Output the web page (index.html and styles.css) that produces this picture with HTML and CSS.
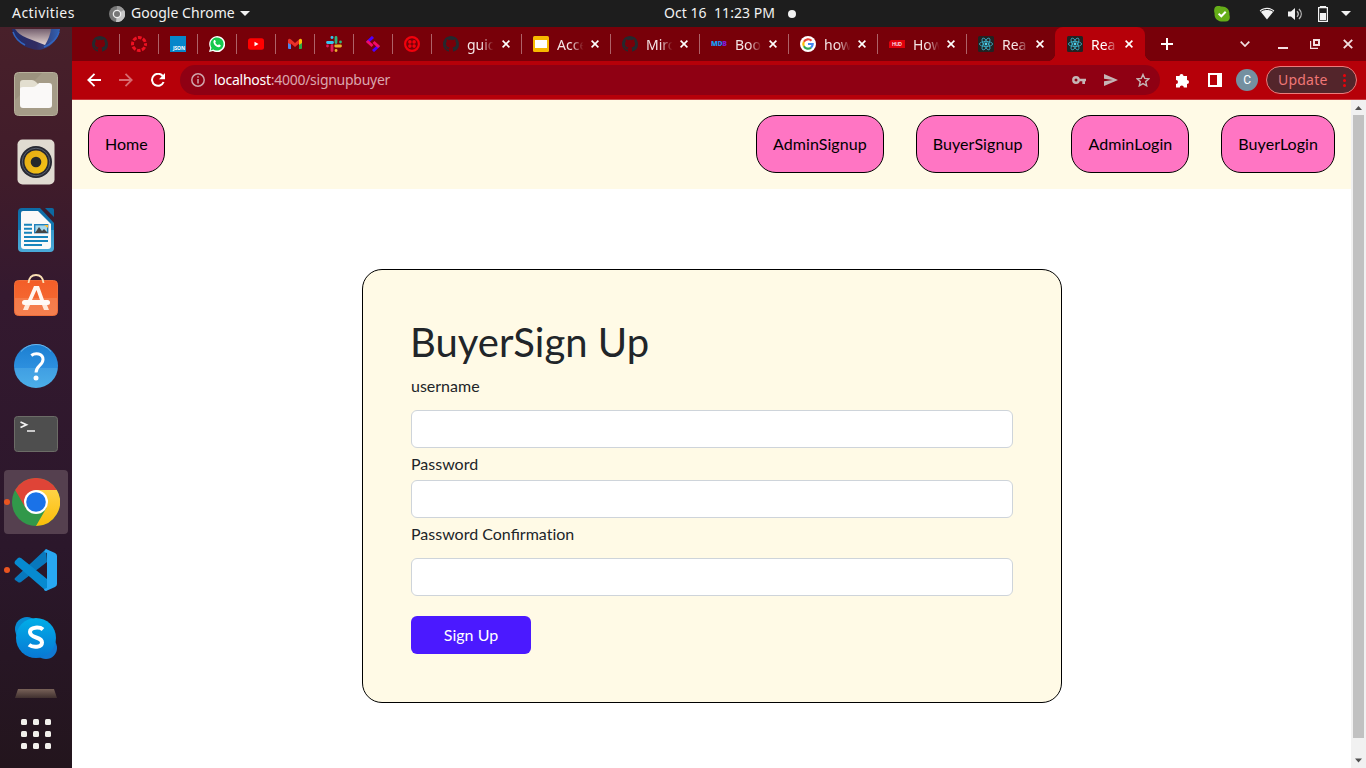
FILE: index.html
```html
<!DOCTYPE html>
<html lang="en">
<head>
<meta charset="utf-8">
<title>React App</title>
<link rel="stylesheet" href="styles.css">
</head>
<body>
<svg width="0" height="0" class="defs">
  <defs>
    <symbol id="github" viewBox="0 0 16 16"><path fill="#24292e" d="M8 0C3.58 0 0 3.58 0 8c0 3.54 2.29 6.53 5.47 7.59.4.07.55-.17.55-.38 0-.19-.01-.82-.01-1.49-2.01.37-2.53-.49-2.69-.94-.09-.23-.48-.94-.82-1.13-.28-.15-.68-.52-.01-.53.63-.01 1.08.58 1.23.82.72 1.21 1.87.87 2.33.66.07-.52.28-.87.51-1.07-1.78-.2-3.64-.89-3.64-3.95 0-.87.31-1.59.82-2.15-.08-.2-.36-1.02.08-2.12 0 0 .67-.21 2.2.82.64-.18 1.32-.27 2-.27s1.36.09 2 .27c1.53-1.04 2.2-.82 2.2-.82.44 1.1.16 1.92.08 2.12.51.56.82 1.27.82 2.15 0 3.07-1.87 3.75-3.65 3.95.29.25.54.73.54 1.48 0 1.07-.01 1.93-.01 2.2 0 .21.15.46.55.38A8.01 8.01 0 0 0 16 8c0-4.42-3.58-8-8-8z"/></symbol>
    <symbol id="react" viewBox="0 0 16 16"><rect width="16" height="16" rx="1.5" fill="#222"/><g fill="none" stroke="#3cb6cf" stroke-width=".8"><ellipse cx="8" cy="8" rx="6.6" ry="2.5"/><ellipse cx="8" cy="8" rx="6.6" ry="2.5" transform="rotate(60 8 8)"/><ellipse cx="8" cy="8" rx="6.6" ry="2.5" transform="rotate(120 8 8)"/></g><circle cx="8" cy="8" r="1.4" fill="#53d4f0"/></symbol>
    <symbol id="close" viewBox="0 0 8 8"><path d="M.6.6l6.8 6.800M7.400.6L.6 7.400" stroke="#fff" stroke-width="1.600"/></symbol>
    <linearGradient id="sheet" x2="0" y2="1"><stop offset="0" stop-color="#0d6ba5"/><stop offset=".5" stop-color="#1479b2"/><stop offset=".5" stop-color="#3599cb"/><stop offset="1" stop-color="#4aaad8"/></linearGradient>
    <linearGradient id="bag" x2="0" y2="1"><stop offset="0" stop-color="#f35e28"/><stop offset=".5" stop-color="#f4662f"/><stop offset=".5" stop-color="#f57a48"/><stop offset="1" stop-color="#f48050"/></linearGradient>
    <linearGradient id="help" x2="0" y2="1"><stop offset="0" stop-color="#1b7ed0"/><stop offset=".55" stop-color="#2d90df"/><stop offset=".55" stop-color="#409fe3"/><stop offset="1" stop-color="#4caee8"/></linearGradient>
    <linearGradient id="skype" x2="0" y2="1"><stop offset="0" stop-color="#00aee8"/><stop offset="1" stop-color="#0878d4"/></linearGradient>
    <linearGradient id="bird" x2="1" y2="0"><stop offset="0" stop-color="#1e2e70"/><stop offset=".5" stop-color="#322b60"/><stop offset="1" stop-color="#3163b5"/></linearGradient>
    <linearGradient id="mail" x2="0" y2="1"><stop offset="0" stop-color="#75606f"/><stop offset="1" stop-color="#e4d5d2"/></linearGradient>
    <linearGradient id="trash" x2="0" y2="1"><stop offset="0" stop-color="#786258"/><stop offset="1" stop-color="#40302f"/></linearGradient>
    <linearGradient id="cone" x2="1" y2="1"><stop offset="0" stop-color="#e9ad08"/><stop offset=".5" stop-color="#e9b51c"/><stop offset="1" stop-color="#f8c70c"/></linearGradient>
    <linearGradient id="yel" x2="0" y2="1"><stop offset="0" stop-color="#ffd246"/><stop offset="1" stop-color="#fabd08"/></linearGradient>
  </defs>
</svg>

<header class="topbar">
  <span class="activities">Activities</span>
  <svg class="app-icon" width="16" height="16"><circle cx="8" cy="8" r="8" fill="#777"/><path d="M8 8V0a8 8 0 0 1 7 12z" fill="#999"/><path d="M8 8l7-4a8 8 0 0 1-8 12z" fill="#c5c5c5"/><circle cx="8" cy="8" r="4.300" fill="#eee"/><circle cx="8" cy="8" r="3" fill="#777"/></svg>
  <span class="app-name">Google Chrome</span>
  <svg class="caret" width="10" height="5"><path d="M0 0h10L5 5z" fill="#f2f2f2"/></svg>
  <span class="clock">Oct 16&nbsp; 11:23 PM</span>
  <i class="dot"></i>
  <div class="tray">
    <svg width="16" height="16"><path d="M1 1.300C2 0 5-.2 7 .5c5-.7 9 3 8.400 8.300C16.500 12 15.500 16 10.500 15.400 5 16.200 0 13 .6 7.500 0 5.500-.2 3 1 1.300z" fill="#65ad18"/><path d="M4.600 7.600l2.700 2.700 4.400-4.500" fill="none" stroke="#fff" stroke-width="2"/></svg>
    <svg class="wifi" width="16" height="14"><path d="M.7 3.500C4.800-.2 11.200-.2 15.300 3.500L8 12.500z" fill="#f2f2f2"/><path d="M1.800 4.500c3.500-2.700 8.900-2.700 12.400 0" fill="none" stroke="#1d1d1d"/></svg>
    <svg class="volume" width="16" height="14"><path d="M1 4.500h3L8 1v12L4 9.500H1z" fill="#f2f2f2"/><path d="M10 4.200c1.500 1.600 1.500 4 0 5.600M12 2c3 3 3 7 0 10" fill="none" stroke="#bbb" stroke-width="1.300"/></svg>
    <svg class="battery" width="10" height="16"><path d="M2.500 1.600V.5h5v1.100M.6 1.700h8.800v13.600H.6z" fill="none" stroke="#f2f2f2" stroke-width="1.200"/><path d="M2 7h6v7H2z" fill="#f2f2f2"/></svg>
    <svg class="menu-caret" width="10" height="5"><path d="M0 0h10L5 5z" fill="#f2f2f2"/></svg>
  </div>
</header>

<div class="desktop">
  <aside class="dock">
    <div class="slot-top"><svg width="52" height="31"><path d="M2 2h48c-1 9-8 17-17 20-6 2-10 0-14-1C10 18 4 11 2 2z" fill="url(#bird)"/><path d="M5 2h36q-1 8-6 16L17 11Q9 8 5 2z" fill="url(#mail)"/><path d="M3 5c2 6 6 10 12 13M49 5Q46 15 34 20" stroke="#3265bf" stroke-width="1.500" fill="none"/></svg></div>
    <div class="slot"><svg width="48" height="48"><rect x="2.500" y="2.500" width="43" height="43" rx="4" fill="#9b927e" stroke="#b7b19c"/><path d="M3 30L30 3h12q3 0 3 3v36q0 3-3 3H6q-3 0-3-3z" fill="#aaa18d" opacity=".7"/><path d="M8 31V13q0-3 3-3h9q2 0 4 2l2 2h10v6z" fill="#e2decf"/><path d="M8 19q0-2 3-2h10q2 0 4-2l2-2h10q3 0 3 3v19q0 3-3 3H11q-3 0-3-3z" fill="#faf9f8"/></svg></div>
    <div class="slot"><svg width="48" height="48"><rect x="5.500" y="1.500" width="37" height="45" rx="5" fill="#e0dbd1"/><circle cx="24" cy="24" r="16" fill="#272932"/><circle cx="24" cy="24" r="13.800" fill="none" stroke="#59616e" stroke-width="1"/><circle cx="24" cy="24" r="11.500" fill="url(#cone)"/><circle cx="24" cy="24" r="5.300" fill="#25292b"/></svg></div>
    <div class="slot"><svg width="48" height="48"><path d="M10 2h18l14 15v25q0 4-4 4H10q-4 0-4-4V6q0-4 4-4z" fill="url(#sheet)"/><path d="M33 2h7q2 0 2 2v7z" fill="#0c69a1"/><path d="M11 5h15l13 13v22q0 3-3 3H12q-3 0-3-3V7q0-2 2-2z" fill="#faf9f8"/><path d="M12 18.800h8M12 22.800h8M12 26.800h8M12 30.900h24M12 34.900h24M12 38.900h18" stroke="#1684bc" stroke-width="2"/><rect x="22.700" y="18.700" width="13" height="8" fill="#a6d9ec" stroke="#2181bb" stroke-width="1.400"/><path d="M23 27l4-6 3 4 2-2 4 4z" fill="#444"/><path d="M32 19h4v3z" fill="#fdbc32"/></svg></div>
    <div class="slot"><svg width="48" height="48"><rect x="2.500" y="6.500" width="43" height="35" rx="4" fill="url(#bag)" stroke="#ed6d3a"/><path d="M16.500 9C17 4 19 1 24 1s7 3 7.500 8" fill="none" stroke="#fbe0b4" stroke-width="1.800"/><path d="M22 12h5l5 14h-4L24.500 16 20 26h-4z" fill="#fff7f0"/><path d="M13 31h5l-2 5h-5zM30 31h5l2 5h-5z" fill="#ffe8d9"/><rect x="10" y="26" width="28" height="5" rx="2.500" fill="#fffaf6"/></svg></div>
    <div class="slot"><svg width="48" height="48"><circle cx="24" cy="24" r="22" fill="url(#help)"/><path d="M9 9.500Q15 2.700 24 2.500T39 9.500" fill="none" stroke="#6eb6ea"/><path d="M19.300 13.500c4-3 11.700-2.400 11.700 4 0 6-7 5.800-7 13" fill="none" stroke="#fff" stroke-width="3"/><circle cx="24" cy="36" r="2.500" fill="#fff"/></svg></div>
    <div class="slot"><svg width="48" height="48"><rect x="2.500" y="6.500" width="43" height="35" rx="3" fill="#4e4e4e" stroke="#6c6c67"/><path d="M8.500 12l6 2.700-6 2.800M15 21h8" fill="none" stroke="#f2f2f2" stroke-width="1.700"/></svg></div>
    <div class="slot active"><i class="running"></i><svg width="48" height="48"><circle cx="24" cy="24" r="24" fill="#31984a"/><path d="M24 12h20.800A24 24 0 0 1 24 48l10.400-18z" fill="url(#yel)"/><path d="M3.200 12A24 24 0 0 1 44.800 12H24L13.600 30z" fill="#df4437"/><circle cx="24" cy="24" r="12" fill="#fff"/><circle cx="24" cy="24" r="9.800" fill="#1a72e8"/></svg></div>
    <div class="slot"><i class="running"></i><svg width="48" height="48"><path d="M3 32l31-29 1 13L9 36q-2 1-3 0l-3-2q-1-1 0-2z" fill="#0878bd"/><path d="M3 15l3-3q1-1 3 0l26 21v11q-1 1-2 0L3 18q-1-1 0-3z" fill="#078ad0"/><path d="M34 3l9 4q2 1 2 3v28q0 2-2 3l-9 4q-2 0-2-2l3-1V7l-3-1z" fill="#28a8f2"/></svg></div>
    <div class="slot"><svg width="48" height="48"><circle cx="15" cy="15" r="12" fill="#078bd2"/><circle cx="34" cy="34" r="11" fill="#1179d2"/><circle cx="24" cy="24" r="20" fill="url(#skype)"/><path d="M31 15.500c-3-2.700-13-3-13 2.500 0 7 12 4 12 10.500 0 5-9 5.500-13 2.300" fill="none" stroke="#fff" stroke-width="4"/></svg></div>
    <svg class="trash" width="48" height="9"><path d="M6 0h36l3 9H3z" fill="url(#trash)"/></svg>
    <div class="apps"><i></i><i></i><i></i><i></i><i></i><i></i><i></i><i></i><i></i></div>
  </aside>

  <main class="window">
    <div class="tabs">
      <div class="pin"><svg width="16" height="16"><use href="#github"/></svg></div>
      <div class="pin"><svg width="16" height="16"><circle cx="8" cy="8" r="6.500" fill="none" stroke="#ee1122" stroke-width="3" stroke-dasharray="3.700 1.405" stroke-dashoffset="1.850"/></svg></div>
      <div class="pin"><svg width="16" height="16"><rect width="16" height="16" fill="#0786ca"/><text x="3" y="14.300" font-family="Noto Sans" font-size="5" font-weight="700" fill="#fff" textLength="12">JSON</text></svg></div>
      <div class="pin"><svg width="16" height="16"><path d="M0 16l1.200-4A8 8 0 1 1 4 14.900z" fill="#fff"/><path d="M1.600 14.400l.9-2.700A6.600 6.600 0 1 1 4.300 13.500z" fill="#14c94c"/><path d="M4.800 4.500c1-1 1.500-.3 2.100 1.300l-.7 1c.7 1.300 1.500 2 2.800 2.500l.9-1c1.500.6 2.500 1 1.500 2.200-2.500 2.700-8.500-2.500-6.600-6z" fill="#fff"/></svg></div>
      <div class="pin"><svg width="16" height="16"><rect y="2.300" width="16" height="11.400" rx="2.500" fill="#f00"/><path d="M6.500 5.700l4 2.300-4 2.300z" fill="#fff"/></svg></div>
      <div class="pin"><svg width="16" height="16"><path d="M1 4l3 2v7H2q-1 0-1-1z" fill="#4a86ef"/><path d="M12 6l3-2v8q0 1-1 1h-2z" fill="#29a84a"/><path d="M1 7V4q1-2 3-.5L8 7l4-3.500v4L8 11 4 7.500v1.200z" fill="#ea3029"/><path d="M12 3.500Q14 2 15 4v3l-3 2z" fill="#fbbc05"/></svg></div>
      <div class="pin"><svg width="16" height="16"><g stroke-linecap="round" stroke-width="2.800"><path d="M1.500 6.500h5M5.900 1.500h.2" stroke="#36c5f0"/><path d="M10 1.500v5M14.500 6v.1" stroke="#2eb67d"/><path d="M9.700 10h4.800M10 14.500h.1" stroke="#ecb22e"/><path d="M6 9.700v4.800M1.500 10v.1" stroke="#e01e5a"/></g></svg></div>
      <div class="pin"><svg width="16" height="16"><g fill="none" stroke-width="3"><path d="M8 1L2 6.500M14 9.500L8 15" stroke="#4d00ff"/><path d="M2 5l5.500 5M8.500 6l5.500 5" stroke="#f30b66"/></g></svg></div>
      <div class="pin"><svg width="16" height="16"><circle cx="8" cy="8" r="6.900" fill="none" stroke="#f2000c" stroke-width="2.200"/><g fill="#f2000c"><circle cx="5.900" cy="5.900" r="1.800"/><circle cx="10.100" cy="5.900" r="1.800"/><circle cx="5.900" cy="10.100" r="1.800"/><circle cx="10.100" cy="10.100" r="1.800"/></g></svg></div>
      <div class="tab first"><svg width="16" height="16"><use href="#github"/></svg><span>guid</span><svg class="x" width="8" height="8"><use href="#close"/></svg></div>
      <div class="tab"><svg width="16" height="16"><rect width="16" height="16" rx="1.500" fill="#f7b900"/><path d="M2 4h12v8H2z" fill="#fff"/></svg><span>Acce</span><svg class="x" width="8" height="8"><use href="#close"/></svg></div>
      <div class="tab"><svg width="16" height="16"><use href="#github"/></svg><span>Miro</span><svg class="x" width="8" height="8"><use href="#close"/></svg></div>
      <div class="tab"><svg width="16" height="16"><text y="10.400" font-family="Noto Sans" font-size="7" font-weight="900" textLength="16" fill="#149df2">M<tspan fill="#257ff2">D</tspan><tspan fill="#8419d2">B</tspan></text></svg><span>Boo</span><svg class="x" width="8" height="8"><use href="#close"/></svg></div>
      <div class="tab"><svg width="16" height="16"><circle cx="8" cy="8" r="8" fill="#fff"/><g fill="none" stroke-width="2.200"><path d="M3.900 5.700A4.700 4.700 0 0 1 11.500 4.800" stroke="#ea4335"/><path d="M3.900 5.700a4.700 4.700 0 0 0 0 4.600" stroke="#fbbc05"/><path d="M3.900 10.300a4.700 4.700 0 0 0 7.100 1.300" stroke="#34a853"/><path d="M8 8h4.700a4.700 4.700 0 0 1-1.700 3.600" stroke="#4285f4"/></g></svg><span>how</span><svg class="x" width="8" height="8"><use href="#close"/></svg></div>
      <div class="tab"><svg width="16" height="16"><path d="M2 4h14v8H0V6z" fill="#e0000b"/><text x="3" y="9.800" font-family="Noto Sans" font-size="5" font-weight="500" fill="#fff" textLength="10">HUD</text></svg><span>How</span><svg class="x" width="8" height="8"><use href="#close"/></svg></div>
      <div class="tab before-current"><svg width="16" height="16"><use href="#react"/></svg><span>Rea</span><svg class="x" width="8" height="8"><use href="#close"/></svg></div>
      <div class="tab current"><svg width="16" height="16"><use href="#react"/></svg><span>Rea</span><svg class="x" width="8" height="8"><use href="#close"/></svg></div>
      <i class="foot"></i>
      <svg class="new-tab" width="12" height="12"><path d="M6 0v12M0 6h12" stroke="#fff" stroke-width="2"/></svg>
      <div class="controls">
        <svg width="10" height="6"><path d="M.7.7L5 5 9.300.7" fill="none" stroke="#f3dfe1" stroke-width="1.700"/></svg>
        <svg width="10" height="10"><path d="M0 9h10" stroke="#f3dfe1" stroke-width="2"/></svg>
        <svg width="10" height="10"><path d="M4 1h5v5H4z" fill="none" stroke="#f3dfe1" stroke-width="2"/><path d="M.6 2v7.400H8" fill="none" stroke="#f3dfe1" stroke-width="1.200"/></svg>
        <svg width="10" height="10"><path d="M.8.8l8.400 8.400M9.200.8L.8 9.200" stroke="#f3dfe1" stroke-width="1.900"/></svg>
      </div>
    </div>

    <div class="toolbar">
      <svg width="14" height="14"><path d="M14 7H1.500M7.500.8L1.300 7l6.200 6.200" fill="none" stroke="#fff" stroke-width="1.800"/></svg>
      <svg width="14" height="14"><path d="M0 7h12.500M6.500.8L12.700 7l-6.200 6.200" fill="none" stroke="#d76a70" stroke-width="1.800"/></svg>
      <svg width="14" height="14"><path d="M12.600 9A6 6 0 1 1 11.700 3L13 4.400" fill="none" stroke="#fff" stroke-width="2"/><path d="M14 0v6.200H8z" fill="#fff"/></svg>
      <div class="omnibox">
        <svg width="14" height="14"><circle cx="7" cy="7" r="6.200" fill="none" stroke="#cfa4ac" stroke-width="1.500"/><path d="M7 6v4.500M7 3.200v1.600" stroke="#cfa4ac" stroke-width="1.500"/></svg>
        <span class="url">localhost<span>:4000/signupbuyer</span></span>
        <svg width="14" height="8"><circle cx="4" cy="4" r="2.700" fill="none" stroke="#c5b5b6" stroke-width="2.400"/><path d="M7 2.700h7v2.600h-1V8h-2.700V5.300H7z" fill="#c5b5b6"/></svg>
        <svg width="14" height="12"><path d="M0 0l14 6-14 6V7.300L9 6 0 4.700z" fill="#c5b5b6"/></svg>
        <svg width="14" height="14"><path d="M7 1.500l1.700 3.900 4.200.4-3.200 2.800 1 4.200L7 10.600l-3.700 2.200 1-4.200L1.100 5.800l4.200-.4z" fill="none" stroke="#c5b5b6" stroke-width="1.400"/></svg>
      </div>
      <svg class="puzzle" width="15" height="15"><path d="M1 3h3.500a2 2 0 0 1 4 0H12v4a2 2 0 0 1 0 4v3.500H8.800a2 2 0 0 0-4 0H1V11a2 2 0 0 0 0-4z" fill="#fff"/></svg>
      <svg class="panel" width="14" height="14"><path d="M1 1h12v12H1z" fill="none" stroke="#fff" stroke-width="2"/><path d="M9 1h4v12H9z" fill="#fff"/></svg>
      <span class="avatar">C</span>
      <span class="update">Update<svg width="3" height="13"><g fill="#ef0009"><circle cx="1.500" cy="1.500" r="1.500"/><circle cx="1.500" cy="6.500" r="1.500"/><circle cx="1.500" cy="11.500" r="1.500"/></g></svg></span>
    </div>

    <div class="viewport">
      <div class="page">
        <nav>
          <a>Home</a>
          <div class="links"><a>AdminSignup</a><a>BuyerSignup</a><a>AdminLogin</a><a>BuyerLogin</a></div>
        </nav>
        <form class="card">
          <h1>BuyerSign Up</h1>
          <label for="user">username</label>
          <input id="user" class="spaced" type="text">
          <label for="pass">Password</label>
          <input id="pass" type="password">
          <label for="confirm">Password Confirmat&zwnj;ion</label>
          <input id="confirm" class="spaced" type="password">
          <button type="button">Sign Up</button>
        </form>
      </div>
      <div class="scrollbar">
        <svg width="15" height="15"><path d="M4 10h7L7.500 6z" fill="#505050"/></svg>
        <i></i>
        <svg width="15" height="15"><path d="M4 5.500h7L7.500 9.500z" fill="#505050"/></svg>
      </div>
    </div>
  </main>
</div>
</body>
</html>
```
FILE: styles.css
```css
* { box-sizing: border-box; }
body { margin: 0; width: 1366px; height: 768px; overflow: hidden; display: flex; flex-direction: column; font-family: "Noto Sans", sans-serif; }
svg { display: block; flex: none; }
.defs { position: absolute; }

.topbar { height: 27px; flex: none; background: #1d1d1d; color: #f2f2f2; font-size: 14px; line-height: 25px; display: flex; align-items: center; white-space: nowrap; }
.topbar > span { padding-bottom: 2px; }
.activities { width: 97px; padding-left: 12px; letter-spacing: .45px; }
.app-icon { margin-left: 12px; }
.app-name { width: 104px; margin-left: 6px; letter-spacing: .03px; }
.caret { margin-left: 5px; }
.clock { margin-left: 414px; width: 111px; letter-spacing: .05px; }
.dot { width: 8px; height: 8px; border-radius: 50%; background: #f2f2f2; margin-left: 13px; }
.tray { margin-left: auto; display: flex; align-items: center; padding-right: 15px; }
.wifi { margin-left: 29px; }
.volume { margin-left: 12px; }
.battery { margin-left: 15px; }
.menu-caret { margin-left: 13px; }

.desktop { flex: 1; min-height: 0; display: flex; }
.dock { width: 72px; flex: none; display: flex; flex-direction: column; align-items: center; gap: 4px; background: linear-gradient(#48202a 0, #401c2a 20%, #34192f 36%, #2b172b 70%, #23151d 100%); }
.slot-top { height: 31px; }
.slot { width: 64px; height: 64px; flex: none; display: flex; align-items: center; justify-content: center; position: relative; border-radius: 4px; }
.slot.active { background: #55404f; }
.running { position: absolute; left: 0; top: 29px; width: 6px; height: 6px; border-radius: 50%; background: #e95420; }
.trash { margin-top: 15px; }
.apps { margin-top: 17px; display: grid; grid-template-columns: repeat(3, 6px); gap: 6px; }
.apps i { height: 6px; border-radius: 1.5px; background: #f2f0ec; }

.window { flex: 1; min-width: 0; display: flex; flex-direction: column; }
.tabs { height: 34px; flex: none; background: #780009; padding-left: 9px; display: flex; align-items: center; color: #f4e4e5; font-size: 14px; }
.pin, .tab { height: 34px; flex: none; display: flex; align-items: center; background: linear-gradient(#ae6268, #ae6268) right center / 1px 20px no-repeat; }
.pin { width: 39px; padding-left: 11px; }
.tab { width: 89px; padding-left: 11px; }
.tab.first { width: 90px; }
.tab span { width: 28px; margin-left: 8px; overflow: hidden; white-space: nowrap; -webkit-mask-image: linear-gradient(90deg, #000 50%, transparent 95%); }
.tab .x { margin-left: 6px; }
.tab.first .x { margin-left: 7px; }
.before-current { background: radial-gradient(circle at 0 0, transparent 8px, #b60009 8.5px) right bottom / 8px 8px no-repeat; width: 88px; }
.tab.current { width: 90px; padding-left: 12px; background: #b60009; border-radius: 8px 8px 0 0; color: #fff; }
.foot { width: 8px; height: 34px; background: radial-gradient(circle at 100% 0, transparent 8px, #b60009 8.5px) left bottom / 8px 8px no-repeat; }
.new-tab { margin-left: 8px; }
.controls { margin-left: auto; padding-right: 13px; display: flex; align-items: center; gap: 25px; }
.controls svg:first-child { margin-right: 3px; }
.controls svg:nth-child(3) { margin: 0 -2px 0 -3px; }

.toolbar { height: 39px; flex: none; background: #b60009; border-bottom: 1px solid #c83a40; padding: 0 9px 0 15px; display: flex; align-items: center; gap: 18px; }
.omnibox { width: 981px; height: 30px; margin-left: -3px; border-radius: 15px; background: #8f0013; padding: 0 10px 0 11px; display: flex; align-items: center; color: #fff; font-size: 14px; }
.url { flex: 1; margin-left: 9px; line-height: 20px; letter-spacing: -.27px; }
.url span { color: #daa6ae; }
.omnibox > svg + svg { margin-left: 18px; }
.puzzle { margin-left: -3px; }
.avatar { width: 22px; height: 22px; border-radius: 50%; margin-left: -4px; background: #7490a0; color: #fff; font: 12px/22px Roboto, sans-serif; text-align: center; }
.update { width: 91px; height: 28px; margin-left: -10px; border: 1px solid #ed7b7b; border-radius: 14px; background: #53252b; color: #f07777; font-size: 14px; line-height: 26px; letter-spacing: .2px; padding: 0 10px 0 11px; display: flex; align-items: center; justify-content: space-between; }

.viewport { flex: 1; min-height: 0; display: flex; background: #fff; }
.page { flex: 1; font: 16px/24px Lato, sans-serif; color: #212529; }
nav { height: 89px; background: #fffae6; padding: 15px 16px 16px; display: flex; justify-content: space-between; color: #000; }
nav a { display: block; padding: 16px; border: 1px solid #000; border-radius: 20px; background: #ff75c3; }
.links { display: flex; gap: 32px; letter-spacing: .07px; }
.card { width: 700px; height: 434px; margin: 80px auto 0 290px; padding: 48px; border: 1px solid #000; border-radius: 20px; background: #fffae6; display: flex; flex-direction: column; }
h1 { margin: 0 0 8px -1px; font-size: 40px; font-weight: 400; line-height: 48px; }
label { line-height: 24px; }
input { width: 100%; height: 38px; margin: 4px 0; border: 1px solid #ced4da; border-radius: 6px; background: #fff; }
input.spaced { margin-top: 12px; }
button { width: 120px; height: 38px; flex: none; margin-top: 16px; border: 0; border-radius: 6px; background: #4b19ff; color: #fff; font: inherit; }
.scrollbar { width: 15px; background: #f1f1f1; display: flex; flex-direction: column; }
.scrollbar i { width: 11px; height: 623px; margin: 0 2px 15px; background: #c1c1c1; }
```
